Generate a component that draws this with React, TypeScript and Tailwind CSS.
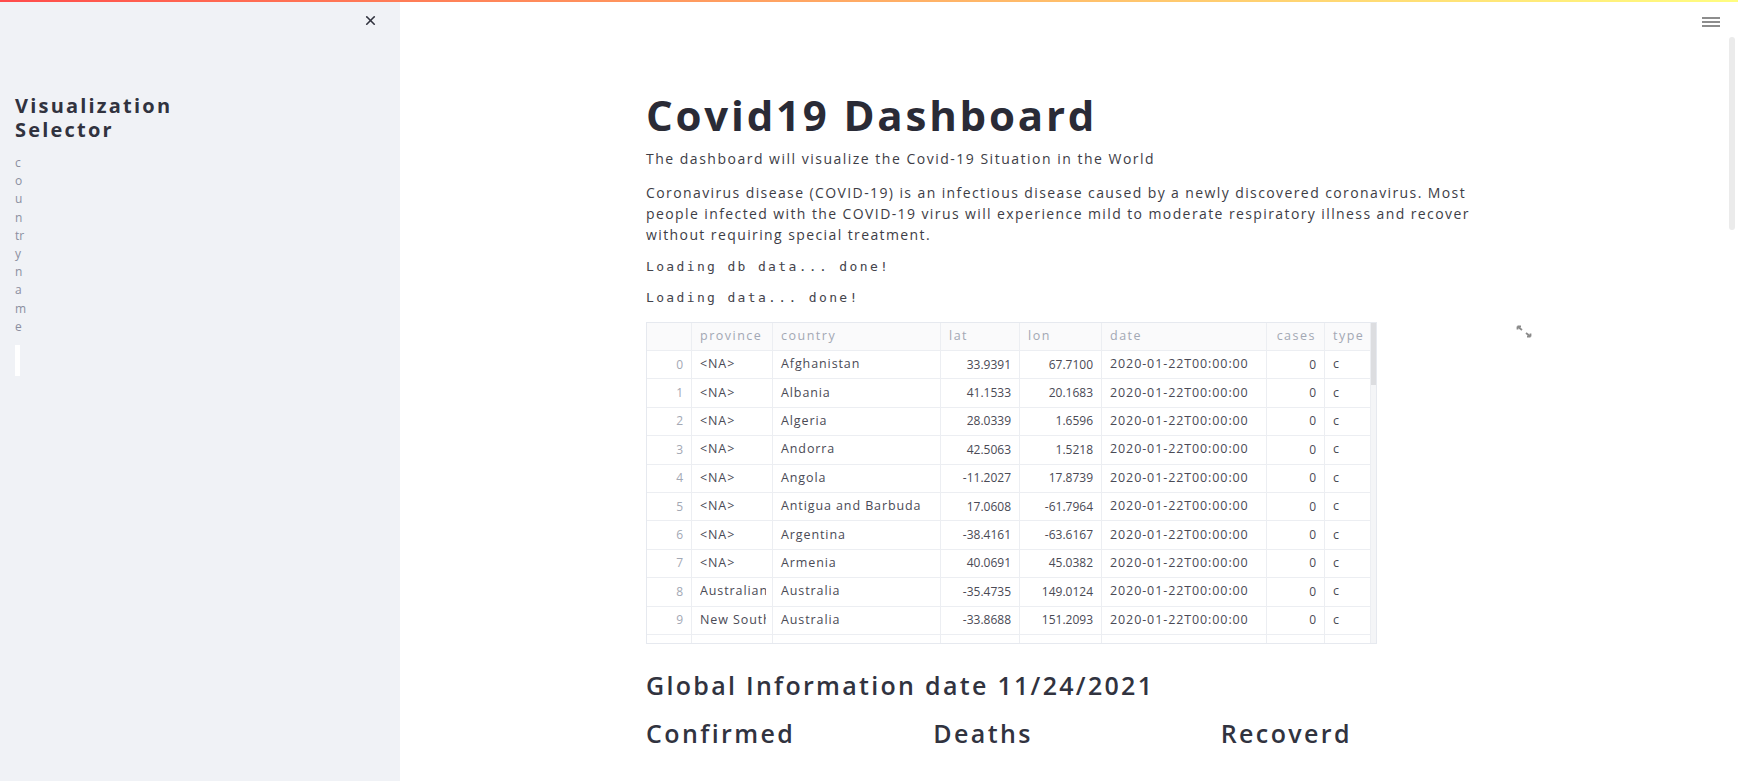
import { X } from "lucide-react";

const rows = [
  ["0", "<NA>", "Afghanistan", "33.9391", "67.7100"],
  ["1", "<NA>", "Albania", "41.1533", "20.1683"],
  ["2", "<NA>", "Algeria", "28.0339", "1.6596"],
  ["3", "<NA>", "Andorra", "42.5063", "1.5218"],
  ["4", "<NA>", "Angola", "-11.2027", "17.8739"],
  ["5", "<NA>", "Antigua and Barbuda", "17.0608", "-61.7964"],
  ["6", "<NA>", "Argentina", "-38.4161", "-63.6167"],
  ["7", "<NA>", "Armenia", "40.0691", "45.0382"],
  ["8", "Australian Capital Territory", "Australia", "-35.4735", "149.0124"],
  ["9", "New South Wales", "Australia", "-33.8688", "151.2093"],
];

const cell = "h-full border-r border-[#eceef2] px-[8px] flex items-center overflow-hidden whitespace-nowrap";
const txt = "text-[12.5px] tracking-[0.9px]";
const num = "text-[12px] justify-end";

// one data row of the frame
const Row = ({ r }: { r: string[] }) => (
  <div className="flex h-[28.4px] border-b border-[#eceef2] text-[#4a4a55]">
    <div className={`${cell} ${num} w-[45px] text-[#a3a8b4]`}>{r[0]}</div>
    <div className={`${cell} ${txt} w-[81px] pr-[6px]`}>
      <span className="block w-full overflow-hidden whitespace-nowrap">{r[1]}</span>
    </div>
    <div className={`${cell} ${txt} w-[168px]`}>{r[2]}</div>
    <div className={`${cell} ${num} w-[79px]`}>{r[3]}</div>
    <div className={`${cell} ${num} w-[82px]`}>{r[4]}</div>
    <div className={`${cell} ${txt} w-[165px]`}>2020-01-22T00:00:00</div>
    <div className={`${cell} ${num} w-[58px]`}>0</div>
    <div className={`${cell} ${txt} w-[46px]`}>c</div>
  </div>
);

const App = () => {
  return (
    <div
      className="relative flex h-[781px] w-full overflow-hidden bg-white text-[#31333f]"
      style={{ fontFamily: '"Open Sans", "Noto Sans", sans-serif' }}
    >
      {/* decoration bar */}
      <div className="absolute left-0 right-0 top-0 z-10 h-[2px] bg-gradient-to-r from-[#ff4b4b] to-[#fffd80]" />

      {/* Sidebar */}
      <aside className="flex w-[400px] shrink-0 flex-col bg-[#f0f2f6] pl-[15px]">
        <div className="flex justify-end pr-[22px] pt-[13px]">
          <X className="h-[15px] w-[15px] text-[#31333f]" strokeWidth={2.6} />
        </div>
        <h2 className="mt-[66px] text-[20px] font-bold leading-[24px] tracking-[2.2px] text-[#31333f]">
          Visualization
          <br />
          Selector
        </h2>
        <div className="mt-[12px] flex flex-col text-[12px] leading-[18.2px] text-[#8b8fa0]">
          {["c", "o", "u", "n", "tr", "y", "n", "a", "m", "e"].map((c, i) => (
            <span key={i}>{c}</span>
          ))}
        </div>
        <div className="mt-[9px] h-[31px] w-[5px] bg-white" />
      </aside>

      {/* Main */}
      <main className="relative flex-1">
        <div className="absolute right-[18px] top-[17px] flex w-[18px] flex-col gap-[2px]">
          <div className="h-[2px] bg-[#8d8d8d]" />
          <div className="h-[2px] bg-[#8d8d8d]" />
          <div className="h-[2px] bg-[#8d8d8d]" />
        </div>
        <div className="absolute right-[3px] top-[37px] h-[193px] w-[6px] rounded-full bg-[#ebebeb]" />

        <div className="mx-auto flex w-[846px] flex-col pt-[91px]">
          <h1 className="text-[42px] font-bold leading-[48px] tracking-[2.8px] text-[#2a2b36]">Covid19 Dashboard</h1>
          <p className="mt-[9px] text-[14px] leading-[21px] tracking-[1.5px] text-[#3d3d46]">
            The dashboard will visualize the Covid-19 Situation in the World
          </p>
          <p className="mt-[13px] whitespace-nowrap text-[14px] leading-[21px] tracking-[1.4px] text-[#3d3d46]">
            Coronavirus disease (COVID-19) is an infectious disease caused by a newly discovered coronavirus. Most
            <br />
            people infected with the COVID-19 virus will experience mild to moderate respiratory illness and recover
            <br />
            without requiring special treatment.
          </p>
          <div
            className="mt-[12px] flex flex-col gap-[11px] text-[13px] leading-[20px] tracking-[2.35px] text-[#44444c]"
            style={{ fontFamily: '"DejaVu Sans Mono", monospace' }}
          >
            <span>Loading db data... done!</span>
            <span>Loading data... done!</span>
          </div>

          {/* dataframe */}
          <div className="relative mt-[14px]">
            <div className="flex h-[322px] w-[731px] overflow-hidden border border-[#e6e9ef]">
              <div className="flex w-[724px] flex-col">
                <div className="flex h-[28px] shrink-0 border-b border-[#eceef2] bg-[#fafafb] text-[12.5px] tracking-[1.5px] text-[#a3a8b4]">
                  <div className={`${cell} w-[45px]`} />
                  <div className={`${cell} w-[81px]`}>province</div>
                  <div className={`${cell} w-[168px]`}>country</div>
                  <div className={`${cell} w-[79px]`}>lat</div>
                  <div className={`${cell} w-[82px]`}>lon</div>
                  <div className={`${cell} w-[165px]`}>date</div>
                  <div className={`${cell} w-[58px] justify-end`}>cases</div>
                  <div className={`${cell} w-[46px]`}>type</div>
                </div>
                {rows.map((r) => (
                  <Row key={r[0]} r={r} />
                ))}
                <div className="flex flex-1">
                  {["w-[45px]", "w-[81px]", "w-[168px]", "w-[79px]", "w-[82px]", "w-[165px]", "w-[58px]", "w-[46px]"].map(
                    (w, i) => (
                      <div key={i} className={`${w} border-r border-[#eceef2]`} />
                    )
                  )}
                </div>
              </div>
              <div className="flex w-[7px] flex-col bg-[#f4f5f7]">
                <div className="h-[62px] w-[6px] bg-[#dcdde0]" />
              </div>
            </div>
            <svg
              className="absolute left-[870px] top-[3px] h-[13px] w-[16px] text-[#8a8a8a]"
              viewBox="0 0 16 13"
              fill="none"
              stroke="currentColor"
              strokeWidth={1.8}
            >
              <path d="M1.5 1.5 L6 5" />
              <path d="M1.5 1.5 h3.5 M1.5 1.5 v3" />
              <path d="M14.5 11.5 L10 8" />
              <path d="M14.5 11.5 h-3.5 M14.5 11.5 v-3" />
            </svg>
          </div>

          <h3 className="mt-[25px] text-[25px] font-semibold leading-[32px] tracking-[2.3px] text-[#31333f]">
            Global Information date 11/24/2021
          </h3>
          <div className="mt-[17px] grid grid-cols-3 gap-[16px] text-[25px] font-semibold leading-[30px] tracking-[2.4px] text-[#31333f]">
            <div>Confirmed</div>
            <div>Deaths</div>
            <div>Recoverd</div>
          </div>
        </div>
      </main>
    </div>
  );
};

export default App;
